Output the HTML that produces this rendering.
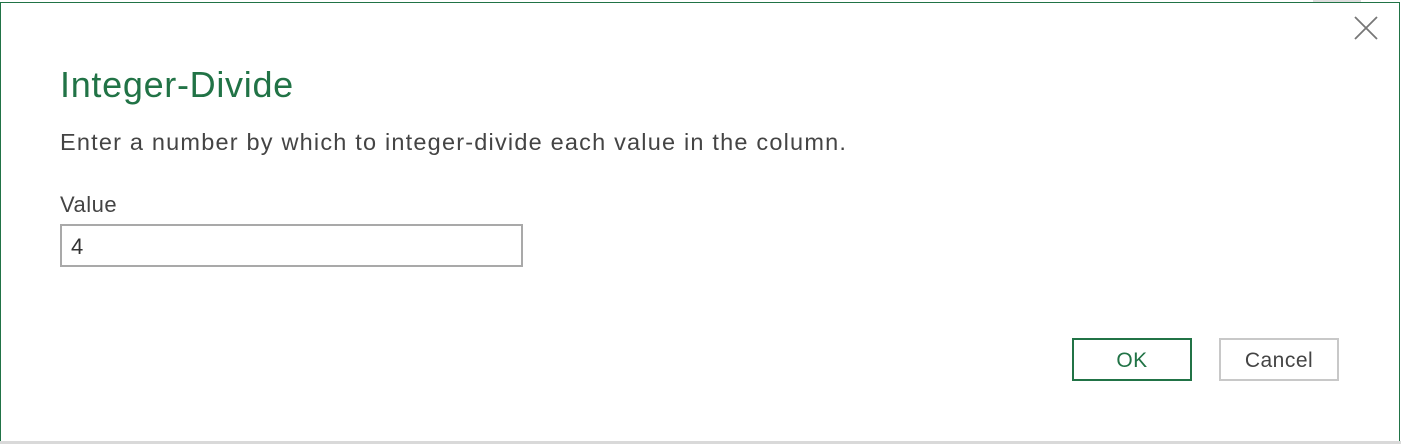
<!DOCTYPE html>
<html><head><style>
html,body{margin:0;padding:0;width:1401px;height:444px;overflow:hidden;background:#fff;font-family:"Liberation Sans",sans-serif;}
.topstrip{position:absolute;left:1313px;top:0;width:48px;height:2px;background:#ddd;}
.bot{position:absolute;left:0;top:441px;width:1401px;height:3px;background:#d9d9d9;}
.frame{position:absolute;left:0;top:2px;width:1398px;height:438px;border:1px solid #217346;background:#fff;}
.t{position:absolute;left:60px;top:64px;font-size:36px;color:#217346;letter-spacing:0.7px;}
.d{position:absolute;left:60px;top:129px;font-size:23.5px;color:#444;letter-spacing:1.2px;}
.l{position:absolute;left:60px;top:192px;font-size:22px;color:#444;letter-spacing:0.5px;}
.in{position:absolute;left:60px;top:224px;width:459px;height:39px;border:2px solid #a9a9a9;box-sizing:content-box;}
.in span{position:absolute;left:9px;top:8px;font-size:22px;color:#333;}
.b{position:absolute;top:338px;width:116px;height:39px;font-size:21px;text-align:center;line-height:41px;letter-spacing:0.5px;}
.ok{left:1072px;border:2px solid #217346;color:#217346;}
.ca{left:1219px;border:2px solid #c8c8c8;color:#444;}
</style></head><body>
<div class="topstrip"></div>
<div class="frame"></div>
<div class="bot"></div>
<svg style="position:absolute;left:1354px;top:16px" width="24" height="24"><path d="M1 1L23 23M23 1L1 23" stroke="#777" stroke-width="1.8"/></svg>
<div class="t">Integer-Divide</div>
<div class="d">Enter a number by which to integer-divide each value in the column.</div>
<div class="l">Value</div>
<div class="in"><span>4</span></div>
<div class="b ok">OK</div>
<div class="b ca">Cancel</div>
</body></html>
